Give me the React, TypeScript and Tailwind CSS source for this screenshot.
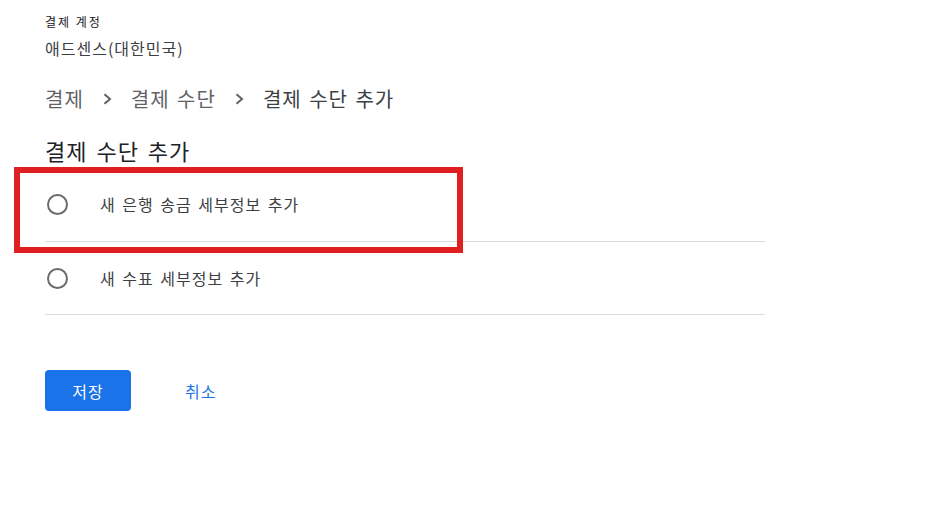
export default function App() {
  const options = ['새 은행 송금 세부정보 추가', '새 수표 세부정보 추가'];

  const Chevron = () => (
    <svg className="mx-[19px] h-[12px] w-[9px] shrink-0" viewBox="0 0 9 12" fill="none">
      <path d="M1.5 1.2 L7 6 L1.5 10.8" stroke="#5f6368" strokeWidth="2" />
    </svg>
  );

  return (
    <div className="relative min-h-[520px] w-[934px] bg-white font-['Noto_Sans_CJK_KR','Noto_Sans',sans-serif] text-[#202124]">
      <div className="pl-[45px] pt-[12px]">
        {/* Account header */}
        <div className="text-[12px] leading-[20px] tracking-[2px] text-[#202124]">결제 계정</div>
        <div className="mt-[5px] text-[16px] leading-[22px] tracking-[1px] text-[#3c4043]">애드센스(대한민국)</div>

        {/* Breadcrumb */}
        <div className="mt-[25px] flex items-center text-[20px] leading-[30px] tracking-[1px] [word-spacing:2px]">
          <span className="text-[#5f6368]">결제</span>
          <Chevron />
          <span className="text-[#5f6368]">결제 수단</span>
          <Chevron />
          <span className="text-[#3c4043]">결제 수단 추가</span>
        </div>

        {/* Title */}
        <h1 className="mt-[21px] text-[22px] leading-[30px] tracking-[1px] text-[#202124] [word-spacing:3px]">결제 수단 추가</h1>

        {/* Options */}
        <div className="w-[720px]">
          {options.map((label, i) => (
            <div
              key={label}
              className={`flex items-center border-b border-[#dadce0] ${i === 0 ? 'h-[77px] pt-[2px]' : 'h-[73px]'}`}
            >
              <span className="ml-[2px] h-[21px] w-[21px] rounded-full border-2 border-[#6b6b6b]" />
              <span className="ml-[32px] text-[16px] tracking-[1px] text-[#3c4043] [word-spacing:2px]">{label}</span>
            </div>
          ))}
        </div>

        {/* Actions */}
        <div className="mt-[55px] flex items-center">
          <button className="h-[41px] w-[86px] rounded-[4px] bg-[#1a73e8] text-[16px] tracking-[1px] text-white">저장</button>
          <button className="ml-[54px] text-[16px] tracking-[1px] text-[#1a73e8]">취소</button>
        </div>
      </div>

      {/* Annotation box */}
      <div className="absolute left-[14px] top-[167px] h-[86px] w-[449px] border-[6px] border-[#e02020]" />
    </div>
  );
}
